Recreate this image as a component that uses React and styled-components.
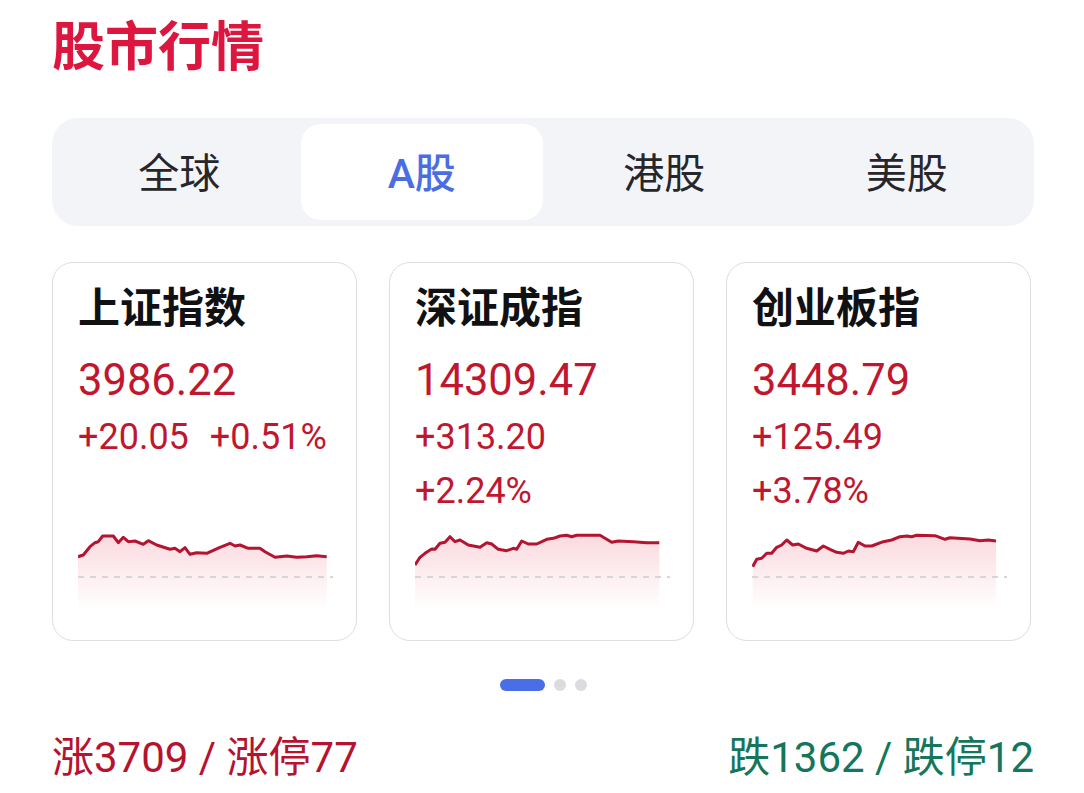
import React from "react";
import styled, { createGlobalStyle } from "styled-components";

const GlobalStyle = createGlobalStyle`
  body {
    margin: 0;
    background: #ffffff;
    font-family: Roboto, "Noto Sans CJK SC", "Noto Sans", sans-serif;
  }
`;

const Page = styled.div`
  width: 1084px;
  box-sizing: border-box;
  padding: 0 50px 0 52px;
`;

const Title = styled.h1`
  margin: 0;
  height: 87px;
  line-height: 87px;
  font-size: 53px;
  font-weight: 700;
  color: #dc163e;
  font-family: "Noto Sans CJK SC", sans-serif;
`;

const TabBar = styled.div`
  margin-top: 31px;
  height: 108px;
  box-sizing: border-box;
  padding: 6px;
  border-radius: 26px;
  background: #f3f4f8;
  display: grid;
  grid-template-columns: repeat(4, 1fr);
`;

const Tab = styled.div`
  border-radius: 20px;
  display: flex;
  align-items: center;
  justify-content: center;
  padding-bottom: 4px;
  font-size: 41px;
  font-weight: ${(p) => (p.active ? 500 : 400)};
  color: ${(p) => (p.active ? "#4a6ee2" : "#26262b")};
  background: ${(p) => (p.active ? "#ffffff" : "transparent")};
`;

const Cards = styled.div`
  margin-top: 36px;
  display: grid;
  grid-template-columns: repeat(3, 305px);
  gap: 32px;
`;

const Card = styled.div`
  height: 379px;
  box-sizing: border-box;
  border: 1.5px solid #dedede;
  border-radius: 21px;
  padding: 16px 25px 30px;
  display: flex;
  flex-direction: column;
`;

const CardName = styled.div`
  height: 52px;
  line-height: 52px;
  font-size: 42px;
  font-weight: 700;
  color: #111114;
  font-family: "Noto Sans CJK SC", sans-serif;
`;

const Price = styled.div`
  margin-top: 21px;
  line-height: 58px;
  font-size: 43.5px;
  color: #c0172f;
`;

const Changes = styled.div`
  margin-top: 4px;
  display: flex;
  flex-wrap: wrap;
  column-gap: 21px;
  row-gap: 8px;
  font-size: 36px;
  line-height: 46px;
  color: #c0172f;
`;

const ChartBox = styled.svg`
  margin-top: auto;
  display: block;
  width: 255px;
  height: 80px;
`;

const Dots = styled.div`
  margin-top: 38px;
  display: flex;
  justify-content: center;
  align-items: center;
  gap: 9px;
`;

const Dot = styled.span`
  width: ${(p) => (p.active ? "45px" : "12px")};
  height: 12px;
  border-radius: 6px;
  background: ${(p) => (p.active ? "#4a6ee8" : "#dcdce0")};
`;

const Breadth = styled.div`
  margin-top: 42px;
  display: flex;
  justify-content: space-between;
  font-size: 42px;
  line-height: 50px;
`;

const BreadthText = styled.span`
  color: ${(p) => (p.down ? "#14765b" : "#b5132f")};
`;

const indices = [
  {
    name: "上证指数",
    price: "3986.22",
    change: "+20.05",
    pct: "+0.51%",
    points: [
      [0, 26.7], [5.3, 25], [12, 16.7], [17, 12.7], [20.3, 11.7], [24.7, 6], [35.3, 6],
      [40.3, 12.7], [45.3, 7.3], [50.3, 11.7], [57, 11], [65.3, 14.3], [70.3, 10.7],
      [78.7, 15], [92, 19.3], [97, 18.3], [102, 21.7], [107, 17.7], [112, 24.3],
      [118.7, 22.7], [128.7, 23.3], [142, 17.3], [152, 13.3], [157, 16], [162, 15],
      [170.3, 18.3], [182, 18.3], [187, 21.7], [197, 27.3], [208.7, 26], [218.7, 27.3],
      [228.7, 26.7], [238.7, 25.7], [248.7, 26.7],
    ],
  },
  {
    name: "深证成指",
    price: "14309.47",
    change: "+313.20",
    pct: "+2.24%",
    points: [
      [0, 35], [5, 27.3], [10, 23.3], [16.7, 19], [20, 19.3], [25, 13.3], [30, 12.3],
      [35, 6.7], [40, 11.7], [45, 10], [53.3, 15], [65, 17.3], [71.7, 12.7], [76.7, 14],
      [83.3, 19.3], [91.7, 20.7], [98.3, 18.3], [101.7, 19.3], [106.7, 11], [113.3, 14],
      [121.7, 14], [131.7, 9.3], [138.3, 8.3], [145, 6], [151.7, 5.3], [156.7, 6.7],
      [161.7, 5.3], [185, 5.3], [196.7, 12.3], [203.3, 11], [218.3, 11.7], [231.7, 12.7],
      [244.3, 12.7],
    ],
  },
  {
    name: "创业板指",
    price: "3448.79",
    change: "+125.49",
    pct: "+3.78%",
    points: [
      [0.7, 36.7], [4.7, 29.3], [9.7, 28.3], [14.7, 23.3], [19.7, 23.3], [24.7, 17.3],
      [29.7, 15], [34.7, 10], [40.7, 15], [46.3, 14], [54.7, 18.3], [64.7, 21], [71.3, 16],
      [78, 19.3], [84.7, 22.3], [91.3, 23.3], [96.3, 21], [101.3, 21.7], [106.3, 12.3],
      [113, 16], [119.7, 16], [131.3, 11.7], [139.7, 10], [148, 6.7], [154.7, 6],
      [159.7, 6.7], [164.7, 5.3], [183, 5.7], [193, 9.3], [198, 7.7], [218, 9], [228, 10.7],
      [236.3, 10], [244, 11],
    ],
  },
];

const tabs = ["全球", "A股", "港股", "美股"];

const Sparkline = ({ id, points }) => {
  const line = points.map(([x, y], i) => `${i ? "L" : "M"}${x} ${y}`).join(" ");
  const first = points[0];
  const last = points[points.length - 1];
  const area = `${line} L${last[0]} 80 L${first[0]} 80 Z`;
  return (
    <ChartBox viewBox="0 0 255 80">
      <defs>
        <linearGradient id={id} x1="0" y1="0" x2="0" y2="1">
          <stop offset="0%" stopColor="#e8475e" stopOpacity="0.2" />
          <stop offset="100%" stopColor="#e8475e" stopOpacity="0" />
        </linearGradient>
      </defs>
      <path d={area} fill={`url(#${id})`} />
      <line x1="0" y1="47" x2="255" y2="47" stroke="#d6d6d6" strokeWidth="2.2" strokeDasharray="6 6" />
      <path d={line} fill="none" stroke="#b3142f" strokeWidth="3" strokeLinejoin="round" />
    </ChartBox>
  );
};

const App = () => (
  <Page>
    <GlobalStyle />
    <Title>股市行情</Title>
    <TabBar>
      {tabs.map((t) => (
        <Tab key={t} active={t === "A股"}>
          {t}
        </Tab>
      ))}
    </TabBar>
    <Cards>
      {indices.map((d, i) => (
        <Card key={d.name}>
          <CardName>{d.name}</CardName>
          <Price>{d.price}</Price>
          <Changes>
            <span>{d.change}</span>
            <span>{d.pct}</span>
          </Changes>
          <Sparkline id={`fill${i}`} points={d.points} />
        </Card>
      ))}
    </Cards>
    <Dots>
      <Dot active />
      <Dot />
      <Dot />
    </Dots>
    <Breadth>
      <BreadthText>涨3709 / 涨停77</BreadthText>
      <BreadthText down>跌1362 / 跌停12</BreadthText>
    </Breadth>
  </Page>
);

export default App;
